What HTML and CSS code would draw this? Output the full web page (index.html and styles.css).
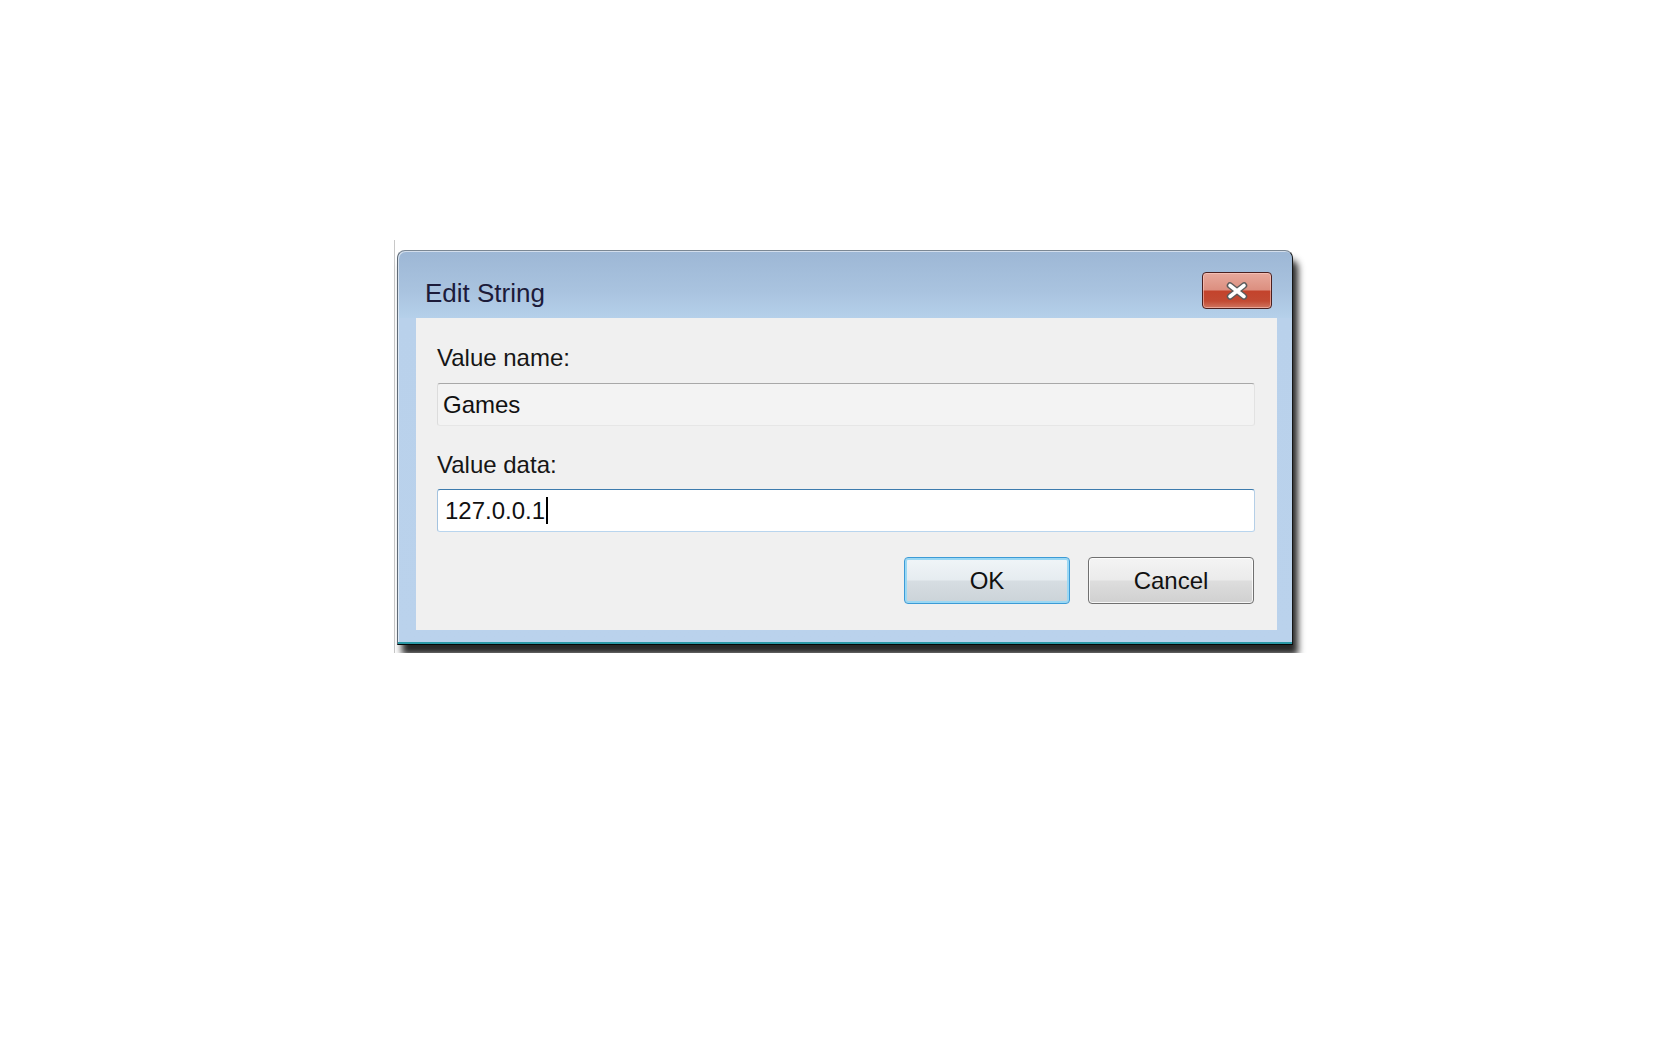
FILE: index.html
```html
<!DOCTYPE html>
<html lang="en">
<head>
    <meta charset="UTF-8">
    <meta name="viewport" content="width=device-width, initial-scale=1.0">
    <title>Edit String</title>
    <link rel="stylesheet" href="styles.css">
</head>
<body>
    <div class="stage">
        <div class="window">
            <div class="titlebar">
                <span class="title">Edit String</span>
                <button class="close-btn">
                    <svg width="26" height="18" viewBox="0 0 26 18">
                        <path d="M6 3.5 L20 14.5 M20 3.5 L6 14.5" stroke="#5b5b5b" stroke-width="6.5" stroke-linecap="round"/>
                        <path d="M6 3.5 L20 14.5 M20 3.5 L6 14.5" stroke="#ffffff" stroke-width="3.6" stroke-linecap="round"/>
                    </svg>
                </button>
            </div>
            <div class="client">
                <label class="label">Value name:</label>
                <div class="field readonly">Games</div>
                <label class="label label-data">Value data:</label>
                <div class="field focused">127.0.0.1<span class="caret"></span></div>
                <div class="buttons">
                    <button class="btn btn-default">OK</button>
                    <button class="btn">Cancel</button>
                </div>
            </div>
        </div>
    </div>
</body>
</html>
```
FILE: styles.css
```css
*{
    margin: 0;
    padding: 0;
    box-sizing: border-box;
}
body{
    background-color: #ffffff;
    font-family: "Liberation Sans", Arial, sans-serif;
    font-size: 24px;
    color: #111111;
}
.stage{
    width: fit-content;
    margin: 240px 0 0 394px;
    padding: 10px 0 8px 2px;
    border-left: 1px solid #c8c8c8;
}
.window{
    width: 896px;
    border: 1px solid;
    border-color: #7c8894 #151515 #050505 #5f6a76;
    border-radius: 8px 8px 0 0;
    background: linear-gradient(to bottom, #9db7d5 0, #a9c3df 40px, #b5d0ea 67px, #b9d1eb 67px, #bad2ec 100%);
    box-shadow: inset 0 -2px 0 #2a98a6, inset 1px 1px 0 rgba(255,255,255,0.55), 5px 10px 7px rgba(0,0,0,0.85);
}
.titlebar{
    height: 67px;
    display: flex;
    justify-content: space-between;
    align-items: flex-start;
    padding: 0 20px 0 27px;
}
.title{
    margin-top: 26px;
    font-size: 26px;
    line-height: 32px;
    color: #1c1b3a;
}
.close-btn{
    margin-top: 21px;
    width: 70px;
    height: 37px;
    border: 1px solid #4a2020;
    border-radius: 4px;
    background: linear-gradient(to bottom, #e7a99c 0, #dc8f80 48%, #c3432c 52%, #c24a33 80%, #cf7560 100%);
    box-shadow: inset 0 0 0 1px rgba(255,210,200,0.55);
    display: flex;
    justify-content: center;
    align-items: center;
}
.client{
    margin: 0 15px 14px 18px;
    background-color: #f0f0f0;
    padding: 26px 22px 26px 21px;
    display: flex;
    flex-direction: column;
}
.label{
    line-height: 28px;
    color: #161616;
}
.label-data{
    margin-top: 25px;
}
.field{
    height: 43px;
    margin-top: 11px;
    padding-left: 5px;
    display: flex;
    align-items: center;
    border: 1px solid;
    border-radius: 3px;
    line-height: 28px;
}
.readonly{
    background-color: #f3f3f3;
    border-color: #a8a8a8 #e2e2e2 #e6e6e6 #dcdcdc;
}
.focused{
    margin-top: 10px;
    background-color: #ffffff;
    border-color: #3d7bad #b5cfe7 #b9d5ee #a4c3df;
    padding-left: 7px;
}
.caret{
    display: inline-block;
    width: 2px;
    height: 27px;
    margin-left: 1px;
    background-color: #000000;
}
.buttons{
    margin-top: 25px;
    display: flex;
    justify-content: flex-end;
    gap: 18px;
    padding-right: 1px;
}
.btn{
    width: 166px;
    height: 47px;
    font-family: "Liberation Sans", Arial, sans-serif;
    font-size: 24px;
    color: #111111;
    border: 1px solid #707070;
    border-radius: 4px;
    background: linear-gradient(to bottom, #f4f4f4 0, #ebebeb 48%, #dddddd 52%, #d0d0d0 100%);
    box-shadow: inset 0 0 0 1px rgba(255,255,255,0.8);
}
.btn-default{
    border-color: #3c9bd6;
    background: linear-gradient(to bottom, #f0f5f8 0, #e6ecf0 48%, #d6dde2 52%, #cbd3d8 100%);
    box-shadow: inset 0 0 0 2px #9bd8f4;
}
```
